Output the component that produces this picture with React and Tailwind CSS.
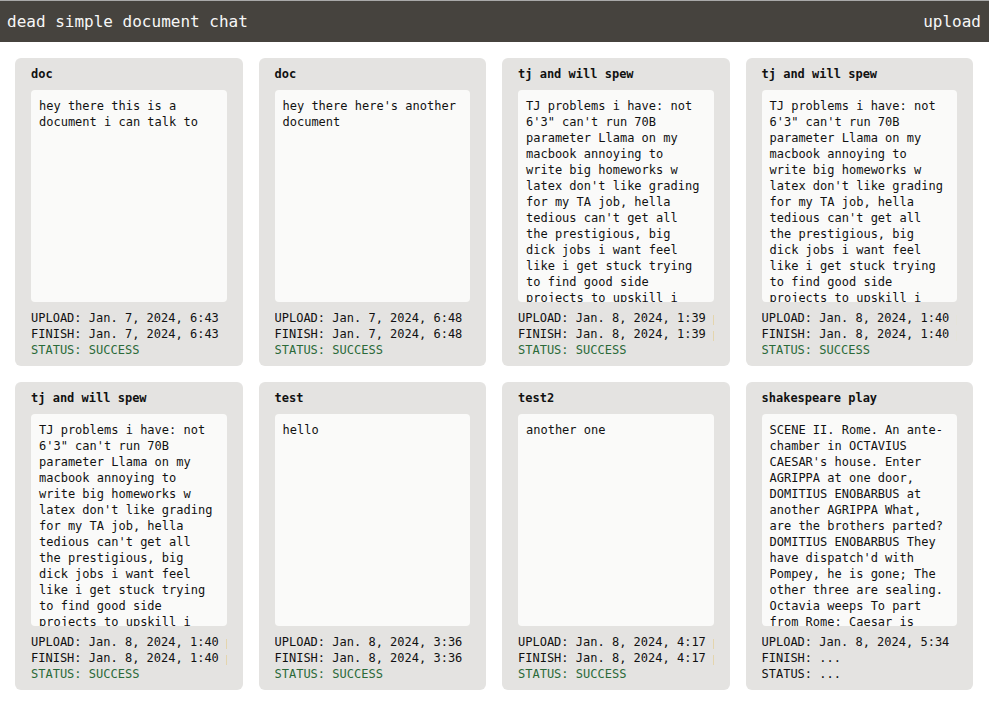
import React from 'react';

const TJ =
  "TJ problems i have: not 6'3\" can't run 70B parameter Llama on my macbook annoying to write big homeworks w latex don't like grading for my TA job, hella tedious can't get all the prestigious, big dick jobs i want feel like i get stuck trying to find good side projects to upskill i don't know what i want to do with my life";

const SHAKESPEARE =
  "SCENE II. Rome. An ante-chamber in OCTAVIUS CAESAR's house. Enter AGRIPPA at one door, DOMITIUS ENOBARBUS at another AGRIPPA What, are the brothers parted? DOMITIUS ENOBARBUS They have dispatch'd with Pompey, he is gone; The other three are sealing. Octavia weeps To part from Rome: Caesar is sad; and Lepidus, Since Pompey's feast, as Menas says, is troubled With the green sickness.";

const docs = [
  { title: 'doc', body: 'hey there this is a document i can talk to', upload: 'Jan. 7, 2024, 6:43', finish: 'Jan. 7, 2024, 6:43', status: 'SUCCESS' },
  { title: 'doc', body: "hey there here's another document", upload: 'Jan. 7, 2024, 6:48', finish: 'Jan. 7, 2024, 6:48', status: 'SUCCESS' },
  { title: 'tj and will spew', body: TJ, upload: 'Jan. 8, 2024, 1:39 p.m.', finish: 'Jan. 8, 2024, 1:39 p.m.', status: 'SUCCESS' },
  { title: 'tj and will spew', body: TJ, upload: 'Jan. 8, 2024, 1:40 p.m.', finish: 'Jan. 8, 2024, 1:40 p.m.', status: 'SUCCESS' },
  { title: 'tj and will spew', body: TJ, upload: 'Jan. 8, 2024, 1:40 p.m.', finish: 'Jan. 8, 2024, 1:40 p.m.', status: 'SUCCESS' },
  { title: 'test', body: 'hello', upload: 'Jan. 8, 2024, 3:36', finish: 'Jan. 8, 2024, 3:36', status: 'SUCCESS' },
  { title: 'test2', body: 'another one', upload: 'Jan. 8, 2024, 4:17 p.m.', finish: 'Jan. 8, 2024, 4:17 p.m.', status: 'SUCCESS' },
  { title: 'shakespeare play', body: SHAKESPEARE, upload: 'Jan. 8, 2024, 5:34', finish: null, status: null },
];

function DocCard({ doc }) {
  return (
    <div className="bg-[#e4e3e1] rounded-md px-4 py-2 flex flex-col">
      <div className="font-bold text-[12px] leading-4 text-[#111]">{doc.title}</div>
      <div className="mt-2 h-[212px] overflow-hidden bg-[#fafaf9] rounded-[4px] p-2 text-[12px] leading-4 text-[#111] break-words">
        {doc.body}
      </div>
      <div className="mt-2 text-[12px] leading-4 whitespace-nowrap overflow-hidden">
        <div className="text-[#111]">UPLOAD: {doc.upload}</div>
        <div className="text-[#111]">FINISH: {doc.finish ?? '...'}</div>
        {doc.status ? (
          <div className="text-[#2b6a39]">STATUS: {doc.status}</div>
        ) : (
          <div className="text-[#111]">STATUS: ...</div>
        )}
      </div>
    </div>
  );
}

export default function App() {
  return (
    <div
      className="min-h-[712px] bg-white"
      style={{ fontFamily: '"DejaVu Sans Mono", "Liberation Mono", monospace' }}
    >
      {/* Top bar */}
      <div className="h-[42px] bg-[#46433e] border-t border-[#a9a9a9] flex items-center justify-between pl-[7px] pr-2 text-[16px] text-[#f7f7f7]">
        <span>dead simple document chat</span>
        <span>upload</span>
      </div>

      {/* Documents */}
      <div className="grid grid-cols-4 gap-4 pt-4 pb-4 pl-[15px] pr-4">
        {docs.map((d, i) => (
          <DocCard key={i} doc={d} />
        ))}
      </div>
    </div>
  );
}
